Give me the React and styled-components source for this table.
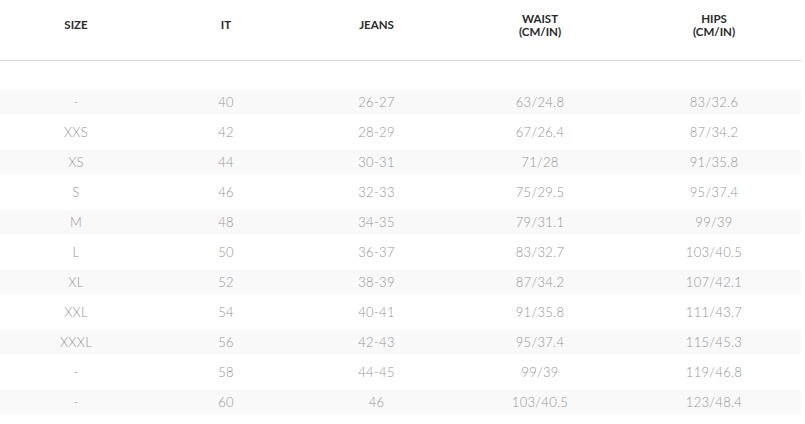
import React from "react";
import styled, { createGlobalStyle } from "styled-components";

const columns = [
  ["SIZE"],
  ["IT"],
  ["JEANS"],
  ["WAIST", "(CM/IN)"],
  ["HIPS", "(CM/IN)"],
];

const rows = [
  ["-", "40", "26-27", "63/24.8", "83/32.6"],
  ["XXS", "42", "28-29", "67/26.4", "87/34.2"],
  ["XS", "44", "30-31", "71/28", "91/35.8"],
  ["S", "46", "32-33", "75/29.5", "95/37.4"],
  ["M", "48", "34-35", "79/31.1", "99/39"],
  ["L", "50", "36-37", "83/32.7", "103/40.5"],
  ["XL", "52", "38-39", "87/34.2", "107/42.1"],
  ["XXL", "54", "40-41", "91/35.8", "111/43.7"],
  ["XXXL", "56", "42-43", "95/37.4", "115/45.3"],
  ["-", "58", "44-45", "99/39", "119/46.8"],
  ["-", "60", "46", "103/40.5", "123/48.4"],
];

function App() {
  return (
    <>
      <GlobalStyle />
      <Table>
        <HeadRow>
          {columns.map((lines, i) => (
            <HeadCell key={i}>
              {lines.map((l) => (
                <span key={l}>{l}</span>
              ))}
            </HeadCell>
          ))}
        </HeadRow>
        <Body>
          {rows.map((row, i) => (
            <Row key={i} striped={i % 2 === 0}>
              {row.map((cell, j) => (
                <Cell key={j}>{cell}</Cell>
              ))}
            </Row>
          ))}
        </Body>
      </Table>
    </>
  );
}

export default App;

const GlobalStyle = createGlobalStyle`
  body {
    margin: 0;
    background: #fff;
    font-family: Lato, "Open Sans", sans-serif;
  }
`;

const Table = styled.div`
  width: 801px;
`;

const grid = `
  display: grid;
  grid-template-columns: 152px 148px 153px 174px 174px;
`;

const HeadRow = styled.div`
  ${grid}
  height: 50px;
  padding-bottom: 10px;
  border-bottom: 1px solid #d4d4d4;
`;

const HeadCell = styled.div`
  display: flex;
  flex-direction: column;
  align-items: center;
  justify-content: center;
  font-size: 11.5px;
  line-height: 13.5px;
  font-weight: 700;
  color: #2a2a2a;
`;

const Body = styled.div`
  display: flex;
  flex-direction: column;
  gap: 6px;
  padding-top: 29px;
`;

const Row = styled.div.withConfig({ shouldForwardProp: (p) => p !== "striped" })`
  ${grid}
  height: 24px;
  background: ${(p) => (p.striped ? "#f9f9f9" : "transparent")};
`;

const Cell = styled.div`
  display: flex;
  align-items: center;
  justify-content: center;
  font-size: 13px;
  font-weight: 300;
  color: #959595;
  letter-spacing: 0.3px;
`;
